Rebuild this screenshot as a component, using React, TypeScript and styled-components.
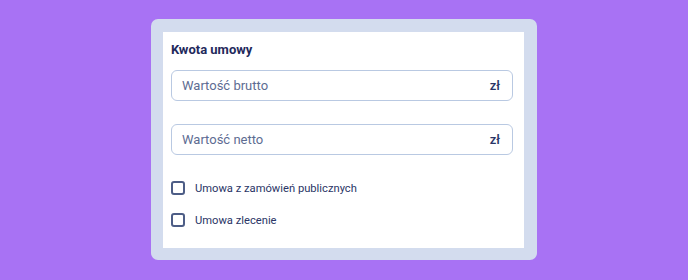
import styled, { createGlobalStyle } from "styled-components";

const GlobalStyle = createGlobalStyle`
  html, body {
    margin: 0;
    padding: 0;
    background: #a872f4;
    font-family: Roboto, "Noto Sans", sans-serif;
  }
`;

const Page = styled.div`
  display: flex;
  justify-content: center;
  align-items: flex-start;
  padding-top: 19px;
`;

const Frame = styled.div`
  width: 386px;
  box-sizing: border-box;
  padding: 13px 13px 12px 12px;
  background: #d3dcee;
  border-radius: 7px;
`;

const Panel = styled.section`
  background: #ffffff;
  padding: 8px 11px 21px 8px;
  display: flex;
  flex-direction: column;
`;

const Title = styled.h3`
  margin: 0 0 10px 0;
  font-size: 13px;
  line-height: 20px;
  font-weight: 700;
  color: #1f2a5c;
`;

const Field = styled.label`
  display: flex;
  align-items: center;
  height: 31px;
  box-sizing: border-box;
  border: 1px solid #b9c9e2;
  border-radius: 6px;
  padding: 0 12px 0 10px;
  margin-bottom: ${({ $gap }: { $gap: number }) => $gap}px;
`;

const Input = styled.input`
  flex: 1;
  border: none;
  outline: none;
  background: transparent;
  font-family: inherit;
  font-size: 13px;
  color: #1f2a5c;
  padding: 0;

  &::placeholder {
    color: #5d6c92;
  }
`;

const Unit = styled.span`
  font-size: 13px;
  font-weight: 500;
  color: #2a3566;
`;

const CheckRow = styled.label`
  display: flex;
  align-items: center;
  gap: 10px;
  height: 14px;
  margin-top: ${({ $top }: { $top: number }) => $top}px;
  cursor: pointer;
`;

const Box = styled.span`
  width: 14px;
  height: 14px;
  box-sizing: border-box;
  border: 2px solid #4d5d86;
  border-radius: 3px;
`;

const CheckText = styled.span`
  font-size: 11.2px;
  color: #2a3566;
`;

export default function App() {
  return (
    <>
      <GlobalStyle />
      <Page>
        <Frame>
          <Panel>
            <Title>Kwota umowy</Title>
            <Field $gap={23}>
              <Input placeholder="Wartość brutto" />
              <Unit>zł</Unit>
            </Field>
            <Field $gap={0}>
              <Input placeholder="Wartość netto" />
              <Unit>zł</Unit>
            </Field>
            <CheckRow $top={26}>
              <Box />
              <CheckText>Umowa z zamówień publicznych</CheckText>
            </CheckRow>
            <CheckRow $top={18}>
              <Box />
              <CheckText>Umowa zlecenie</CheckText>
            </CheckRow>
          </Panel>
        </Frame>
      </Page>
    </>
  );
}
